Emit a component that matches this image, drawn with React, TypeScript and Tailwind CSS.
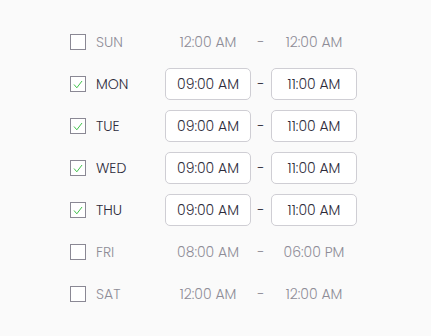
const days = [
  { day: "SUN", on: false, from: "12:00 AM", to: "12:00 AM" },
  { day: "MON", on: true, from: "09:00 AM", to: "11:00 AM" },
  { day: "TUE", on: true, from: "09:00 AM", to: "11:00 AM" },
  { day: "WED", on: true, from: "09:00 AM", to: "11:00 AM" },
  { day: "THU", on: true, from: "09:00 AM", to: "11:00 AM" },
  { day: "FRI", on: false, from: "08:00 AM", to: "06:00 PM" },
  { day: "SAT", on: false, from: "12:00 AM", to: "12:00 AM" },
];

export default function App() {
  return (
    <div
      className="w-[431px] h-[336px] bg-[#fafafa] pt-[26px] pl-[70px] font-light"
      style={{ fontFamily: "Poppins, 'Open Sans', sans-serif" }}
    >
      <div className="flex flex-col gap-[10px]">
        {days.map((d) => (
          <div key={d.day} className="flex items-center h-[32px]">
            <span className="w-[16px] h-[16px] border border-[#8a8894] bg-white flex items-center justify-center">
              {d.on && (
                <svg width="10" height="9" viewBox="0 0 10 9" fill="none">
                  <path d="M1 4.5 L3.8 7.8 L9 1" stroke="#3fc24a" strokeWidth="1" />
                </svg>
              )}
            </span>
            <span
              className={`ml-[10px] w-[69px] text-[14px] ${d.on ? "text-[#2d2b3a]" : "text-[#8e8c97]"}`}
            >
              {d.day}
            </span>
            <TimeBox value={d.from} on={d.on} />
            <span className={`w-[20px] text-center text-[14px] ${d.on ? "text-[#2d2b3a]" : "text-[#8e8c97]"}`}>-</span>
            <TimeBox value={d.to} on={d.on} />
          </div>
        ))}
      </div>
    </div>
  );
}

function TimeBox({ value, on }: { value: string; on: boolean }) {
  return (
    <span
      className={`w-[86px] h-[32px] flex items-center justify-center text-[14px] rounded-[5px] border ${
        on ? "border-[#cfced4] bg-white text-[#2d2b3a]" : "border-transparent text-[#8e8c97]"
      }`}
    >
      {value}
    </span>
  );
}
